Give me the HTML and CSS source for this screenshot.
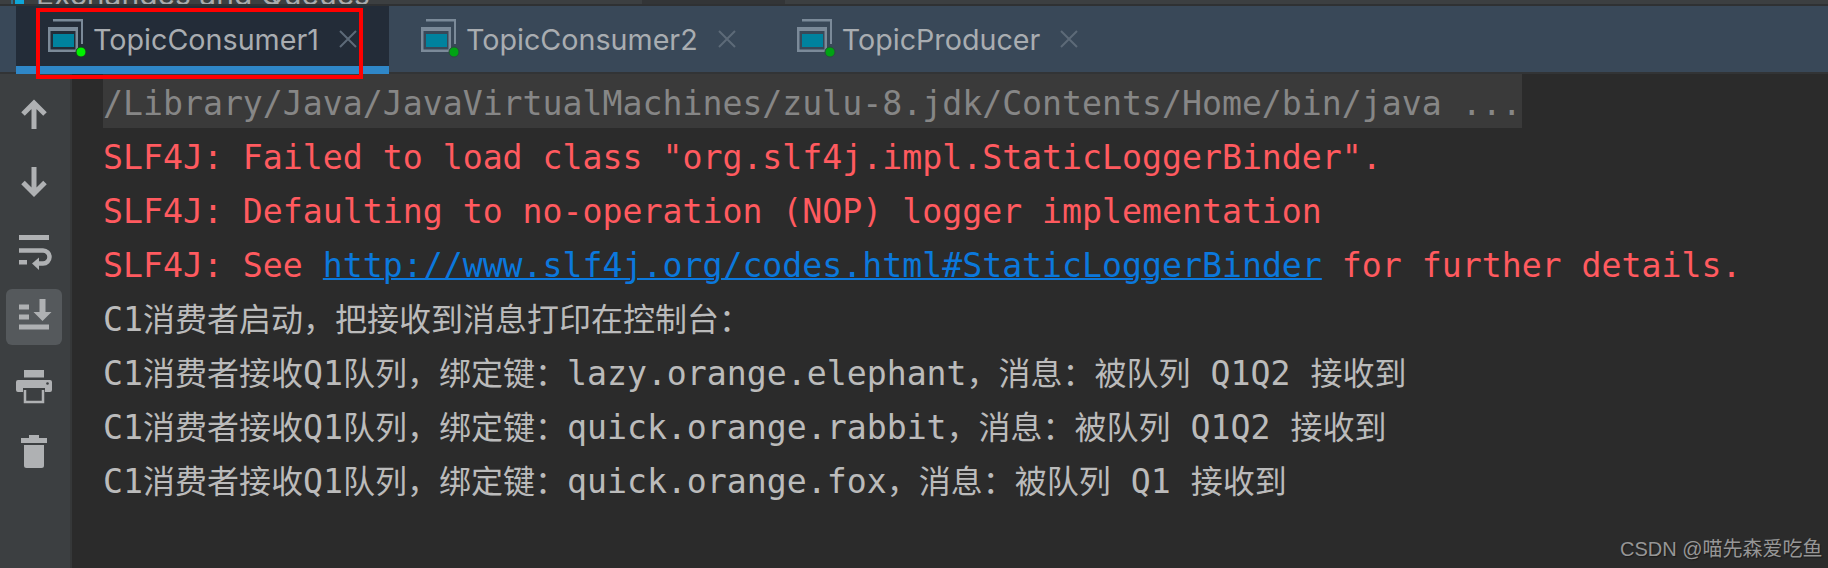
FILE: index.html
```html
<!DOCTYPE html>
<html lang="zh">
<head>
<meta charset="utf-8">
<title>TopicConsumer1</title>
<link rel="stylesheet" href="styles.css">
</head>
<body>
<div class="app">
  <div class="strip">
    <span class="cyan cyan-a"></span><span class="cyan cyan-b"></span>
    <span class="strip-text">Exchanges and Queues</span>
    <span class="strip-dark"></span>
  </div>
  <div class="strip-line"></div>
  <div class="tabbar">
    <div class="tab tab-active">
      <svg class="run-icon" viewBox="0 0 40 40"><use href="#app-icon"/><circle class="dot-on" cx="33" cy="33" r="5"/></svg>
      <span class="tab-label">TopicConsumer1</span>
      <svg class="close" viewBox="0 0 20 20"><path d="M2 2L18 18M18 2L2 18"/></svg>
    </div>
    <div class="tab">
      <svg class="run-icon dim" viewBox="0 0 40 40"><use href="#app-icon"/><circle class="dot-off" cx="33" cy="33" r="5"/></svg>
      <span class="tab-label">TopicConsumer2</span>
      <svg class="close" viewBox="0 0 20 20"><path d="M2 2L18 18M18 2L2 18"/></svg>
    </div>
    <div class="tab">
      <svg class="run-icon dim" viewBox="0 0 40 40"><use href="#app-icon"/><circle class="dot-off" cx="33" cy="33" r="5"/></svg>
      <span class="tab-label">TopicProducer</span>
      <svg class="close" viewBox="0 0 20 20"><path d="M2 2L18 18M18 2L2 18"/></svg>
    </div>
  </div>
  <div class="tab-line"></div>
  <div class="main">
    <aside class="side">
      <div class="tool"><svg viewBox="0 0 56 56"><path class="st" d="M28 44V18M17 29L28 18L39 29"/></svg></div>
      <div class="tool"><svg viewBox="0 0 56 56"><path class="st" d="M28 14V40.500M17 29.500L28 40.500L39 29.500"/></svg></div>
      <div class="tool"><svg viewBox="0 0 56 56"><path class="fl" d="M13 14h30v5H13zM13 39h8v4.500h-8z"/><path class="st st-thin" d="M13 29.500H37a6.500 6.500 0 0 1 0 13H32"/><path class="fl" d="M26 42.500L33 36.500V49z"/></svg></div>
      <div class="tool tool-on"><svg viewBox="0 0 56 56"><path class="fl" d="M13 15.500h10v5H13zM13 25.500h10v5H13zM13 35.500h30v5H13zM33.500 10h6v13h6l-9 9l-9-9h6z"/></svg></div>
      <div class="tool"><svg viewBox="0 0 56 56"><path class="fl" d="M18 13h20v7.500H18zM12 23h32a2 2 0 0 1 2 2v8a2 2 0 0 1-2 2h-5v-4H17v4h-5a2 2 0 0 1-2-2v-8a2 2 0 0 1 2-2z"/><circle class="hole" cx="41.500" cy="26.500" r="1.300"/><path class="st st-frame" d="M19 33V45H37V33"/></svg></div>
      <div class="tool"><svg viewBox="0 0 56 56"><path class="fl" d="M23 10h10v3h8v5H15v-5h8zM18 20h20v20.500a2.500 2.500 0 0 1-2.500 2.500h-15a2.500 2.500 0 0 1-2.500-2.500z"/></svg></div>
    </aside>
    <main class="console">
      <div class="line cmd"><span class="cmd-bg">/Library/Java/JavaVirtualMachines/zulu-8.jdk/Contents/Home/bin/java ...</span></div>
      <div class="line err">SLF4J: Failed to load class "org.slf4j.impl.StaticLoggerBinder".</div>
      <div class="line err">SLF4J: Defaulting to no-operation (NOP) logger implementation</div>
      <div class="line err">SLF4J: See <a class="link" href="#">http://www.slf4j.org/codes.html#StaticLoggerBinder</a> for further details.</div>
      <div class="line">C1<span class="c">消费者启动，把接收到消息打印在控制台：</span></div>
      <div class="line">C1<span class="c">消费者接收</span>Q1<span class="c">队列，绑定键：</span>lazy.orange.elephant<span class="c">，消息：被队列</span> Q1Q2 <span class="c">接收到</span></div>
      <div class="line">C1<span class="c">消费者接收</span>Q1<span class="c">队列，绑定键：</span>quick.orange.rabbit<span class="c">，消息：被队列</span> Q1Q2 <span class="c">接收到</span></div>
      <div class="line">C1<span class="c">消费者接收</span>Q1<span class="c">队列，绑定键：</span>quick.orange.fox<span class="c">，消息：被队列</span> Q1 <span class="c">接收到</span></div>
    </main>
  </div>
  <div class="redbox"></div>
  <div class="mark">CSDN @喵先森爱吃鱼</div>
</div>
<svg class="defs" width="0" height="0">
  <symbol id="app-icon" viewBox="0 0 40 40">
    <path class="frame" d="M5 0H35V25H33V2.500H5z"/>
    <path class="frame" d="M0 8H30V33H0zM2.500 12V30.500H27.500V12z" fill-rule="evenodd"/>
    <rect class="screen" x="5" y="15" width="21" height="13"/>
  </symbol>
</svg>
</body>
</html>
```
FILE: styles.css
```css
* { box-sizing: border-box; }
html, body { margin: 0; padding: 0; background: #2b2b2b; }
.app { position: relative; width: 1828px; height: 568px; overflow: hidden; display: flex; flex-direction: column; }
.defs { position: absolute; }

.strip { height: 4px; background: #3c3f41; display: flex; overflow: hidden; flex: none; }
.cyan { height: 4px; background: #0fa6d8; flex: none; }
.cyan-a { width: 2px; margin-left: 11px; background: #2d6f8c; }
.cyan-b { width: 9px; margin-left: 2px; }
.strip-text { font: 30px/34px "Inter", "Liberation Sans", sans-serif; color: #a9abad; margin-top: -23px; margin-left: 12px; width: 606px; white-space: nowrap; flex: none; }
.strip-dark { width: 143px; background: #333537; flex: none; }
.strip-line { height: 2px; background: #2f3133; flex: none; }

.tabbar { height: 66px; background: #394858; display: flex; padding-left: 16px; flex: none; }
.tab { height: 68px; display: flex; align-items: center; padding: 0 28px 8px 32px; flex: none; position: relative; }
.tab-active { background: #232c38; border-bottom: 8px solid #2f87c8; padding: 0 31px 0 32px; }
.run-icon { width: 40px; height: 40px; margin-right: 5px; margin-top: 6px; flex: none; overflow: visible; }
.tab-label { font: 28.700px/40px "Inter", "Liberation Sans", sans-serif; color: #a9adb1; white-space: nowrap; padding-top: 7px; }
.close { width: 20px; height: 20px; margin-left: 19px; flex: none; margin-top: 5px; }
.close path { stroke: #5d6a78; stroke-width: 2; fill: none; }
.frame { fill: #7b8a99; }
.screen { fill: #00829e; }
.dim .frame { fill: #6a7785; }
.dim .screen { fill: #2c6a89; }
.dot-on { fill: #00f000; stroke: #1b3a20; stroke-width: 1; }
.dot-off { fill: #00a313; stroke: #2b4a40; stroke-width: 1; }

.tab-line { height: 2px; background: #323436; flex: none; }

.main { flex: 1; display: flex; min-height: 0; }
.side { width: 72px; background: #3c3f41; border-right: 2px solid #363839; padding: 11px 8px 0 6px; display: flex; flex-direction: column; gap: 12px; flex: none; }
.tool { width: 56px; height: 56px; border-radius: 6px; flex: none; }
.tool svg { display: block; width: 56px; height: 56px; }
.tool-on { background: #55595c; }
.st { fill: none; stroke: #afb1b3; stroke-width: 5; }
.st-thin { stroke-width: 4.500; }
.st-frame { stroke-width: 2.500; }
.fl { fill: #afb1b3; }
.hole { fill: #3c3f41; }

.console { flex: 1; padding-left: 31px; font: 33.200px/59px "DejaVu Sans Mono", "Noto Sans CJK SC", monospace; color: #bbbbbb; }
.line { height: 54px; white-space: pre; }
.cmd { color: #868686; }
.cmd-bg { display: inline-block; height: 54px; background: #3a3a3a; }
.err { color: #ff5a5f; }
.link { color: #0b78dc; text-decoration: underline; text-decoration-thickness: 2px; }
.c { font-family: "Noto Sans CJK SC", sans-serif; font-size: 32px; line-height: 0; }

.redbox { position: absolute; left: 36px; top: 8px; width: 327px; height: 71px; border: 4px solid #ff0000; }
.mark { position: absolute; left: 1620px; top: 536px; font: 20px/26px "Liberation Sans", "Noto Sans CJK SC", sans-serif; color: #969696; text-shadow: 1px 1px 1px #1c1c1c; white-space: nowrap; }
```
